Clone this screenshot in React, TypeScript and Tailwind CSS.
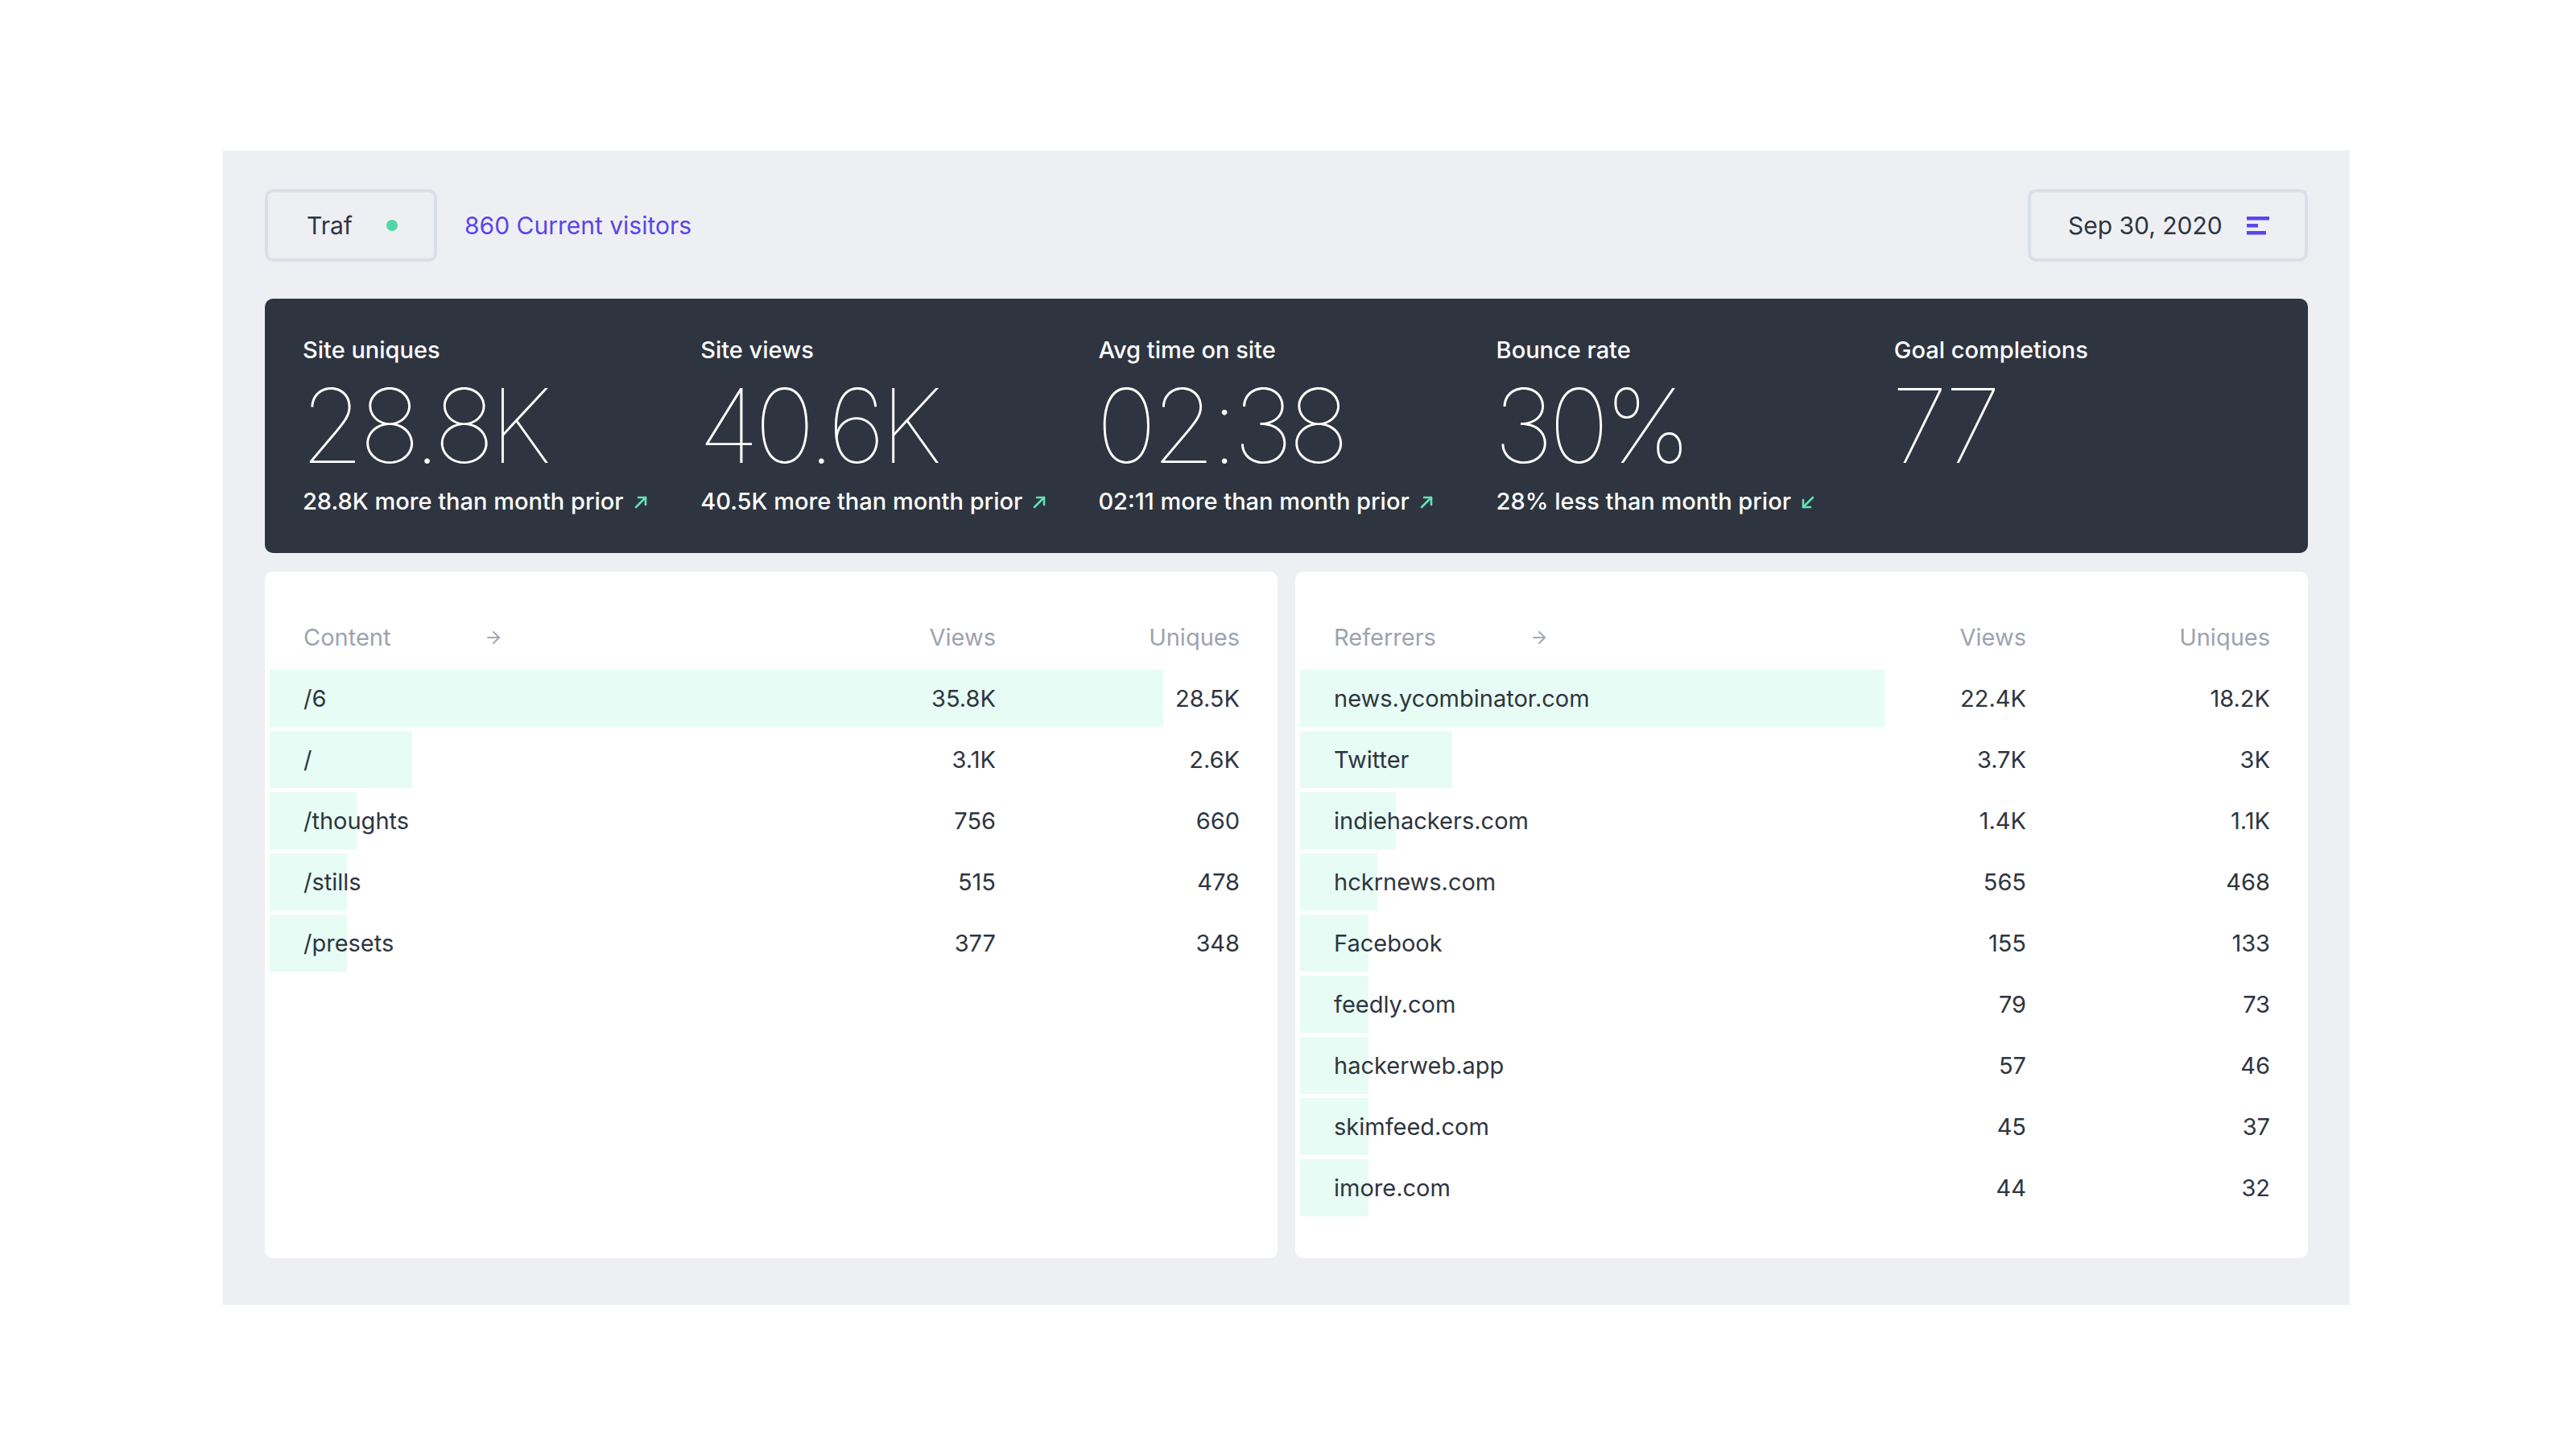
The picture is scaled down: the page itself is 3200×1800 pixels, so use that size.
import { ArrowRight } from "lucide-react";

type Row = { name: string; views: string; uniques: string; bar: number };

const content: Row[] = [
  { name: "/6", views: "35.8K", uniques: "28.5K", bar: 1110 },
  { name: "/", views: "3.1K", uniques: "2.6K", bar: 177 },
  { name: "/thoughts", views: "756", uniques: "660", bar: 108 },
  { name: "/stills", views: "515", uniques: "478", bar: 96 },
  { name: "/presets", views: "377", uniques: "348", bar: 96 },
];

const referrers: Row[] = [
  { name: "news.ycombinator.com", views: "22.4K", uniques: "18.2K", bar: 726 },
  { name: "Twitter", views: "3.7K", uniques: "3K", bar: 189 },
  { name: "indiehackers.com", views: "1.4K", uniques: "1.1K", bar: 119 },
  { name: "hckrnews.com", views: "565", uniques: "468", bar: 96 },
  { name: "Facebook", views: "155", uniques: "133", bar: 85 },
  { name: "feedly.com", views: "79", uniques: "73", bar: 85 },
  { name: "hackerweb.app", views: "57", uniques: "46", bar: 85 },
  { name: "skimfeed.com", views: "45", uniques: "37", bar: 85 },
  { name: "imore.com", views: "44", uniques: "32", bar: 85 },
];

const stats = [
  { label: "Site uniques", value: "28.8K", note: "28.8K more than month prior", dir: "up" },
  { label: "Site views", value: "40.6K", note: "40.5K more than month prior", dir: "up" },
  { label: "Avg time on site", value: "02:38", note: "02:11 more than month prior", dir: "up" },
  { label: "Bounce rate", value: "30%", note: "28% less than month prior", dir: "down" },
  { label: "Goal completions", value: "77", note: "", dir: "" },
];

const Trend = ({ dir }: { dir: string }) => (
  <svg width="18" height="18" viewBox="0 0 18 18" fill="none" stroke="#63e2b6" strokeWidth="2.6" strokeLinecap="round" strokeLinejoin="round">
    {dir === "up" ? (
      <>
        <path d="M3 15 L15 3" />
        <path d="M6 3 H15 V12" />
      </>
    ) : (
      <>
        <path d="M15 3 L3 15" />
        <path d="M3 6 V15 H12" />
      </>
    )}
  </svg>
);

const Table = ({ title, rows }: { title: string; rows: Row[] }) => (
  <div className="bg-white rounded-[10px] pt-[62px] px-[6px]">
    <div className="flex items-center h-[40px] pl-[42px] pr-[41px] text-[29px] text-[#9da3ae]">
      <div className="flex-1 flex items-center">
        <span>{title}</span>
        <ArrowRight className="ml-[116px] text-[#a3a9b4]" size={24} strokeWidth={2} />
      </div>
      <div className="w-[200px] text-right">Views</div>
      <div className="w-[303px] text-right">Uniques</div>
    </div>
    <div className="mt-[20px] flex flex-col gap-[5px]">
      {rows.map((r) => (
        <div key={r.name} className="relative h-[71px] flex items-center pl-[42px] pr-[41px] text-[29px] text-[#2e3540]">
          <div className="absolute left-0 top-0 bottom-0 bg-[#e7fcf4]" style={{ width: r.bar }} />
          <div className="relative flex-1">{r.name}</div>
          <div className="relative w-[200px] text-right">{r.views}</div>
          <div className="relative w-[303px] text-right">{r.uniques}</div>
        </div>
      ))}
    </div>
  </div>
);

export default function App() {
  return (
    <div className="min-h-screen bg-white pt-[187px] pl-[277px] font-['Inter',sans-serif]">
      <div className="w-[2642px] h-[1434px] bg-[#eeeff3] px-[52px] pt-[48px]">
        <header className="flex items-center justify-between h-[90px]">
          <div className="flex items-center h-full">
            <div className="flex items-center h-full w-[214px] pl-[48px] border-[4px] border-[#dbdfe6] rounded-[10px] text-[30px] text-[#2e3540]">
              <span>Traf</span>
              <span className="ml-[42px] w-[14px] h-[14px] rounded-full bg-[#4fd8a6]" />
            </div>
            <span className="ml-[34px] text-[30px] text-[#5a45ea]">860 Current visitors</span>
          </div>
          <div className="flex items-center h-full w-[348px] pl-[46px] border-[4px] border-[#dbdfe6] rounded-[10px] text-[30px] text-[#2e3540]">
            <span>Sep 30, 2020</span>
            <svg className="ml-[30px]" width="28" height="23" viewBox="0 0 28 23" fill="#5a45ea">
              <rect x="0" y="0" width="28" height="4.5" />
              <rect x="0" y="9" width="14" height="4.5" />
              <rect x="0" y="18" width="24" height="4.5" />
            </svg>
          </div>
        </header>

        <section className="mt-[46px] h-[316px] bg-[#2e3540] rounded-[10px] pl-[47px] pr-[20px] pt-[44px] grid grid-cols-5">
          {stats.map((s) => (
            <div key={s.label} className="flex flex-col gap-[10px] text-white">
              <div className="text-[29px] leading-[40px] font-medium">{s.label}</div>
              <div className="text-[128px] leading-[128px] font-thin tracking-[-0.05em] -ml-[3px]">{s.value}</div>
              {s.note && (
                <div className="flex items-center text-[29px] leading-[40px] font-medium">
                  <span>{s.note}</span>
                  <span className="ml-[12px] mt-[2px]">
                    <Trend dir={s.dir} />
                  </span>
                </div>
              )}
            </div>
          ))}
        </section>

        <section className="mt-[23px] grid grid-cols-2 gap-[22px] h-[853px]">
          <Table title="Content" rows={content} />
          <Table title="Referrers" rows={referrers} />
        </section>
      </div>
    </div>
  );
}
